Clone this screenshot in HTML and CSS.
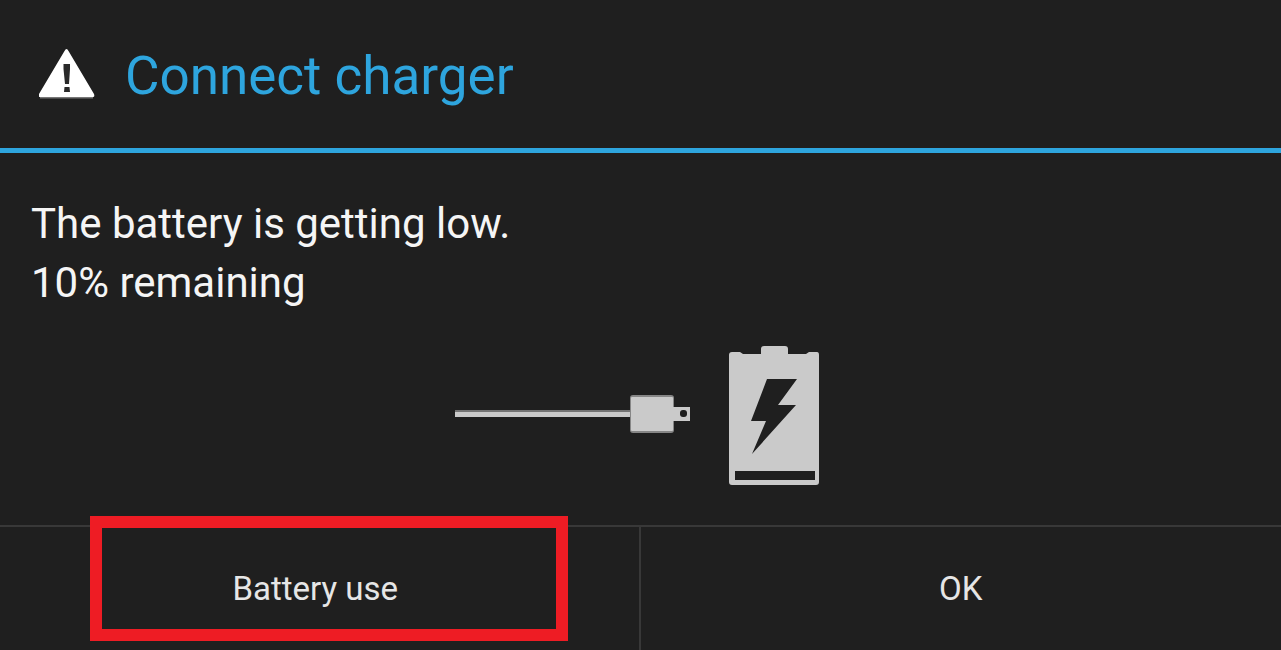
FILE: index.html
```html
<!DOCTYPE html>
<html lang="en">
<head>
    <meta charset="UTF-8">
    <meta name="viewport" content="width=device-width, initial-scale=1.0">
    <title>Connect charger</title>
    <link rel="stylesheet" href="styles.css">
</head>
<body>
    <main class="dialog">
        <header class="dialog-header">
            <svg class="warning-icon" width="56" height="52" viewBox="0 0 56 52" aria-hidden="true">
                <path d="M27.500 1Q28.500 1 29.500 3L55 46Q56 49 54 49H1Q-1 49 0 46L25.500 3Q26.500 1 27.500 1Z" fill="#fff"/>
                <path d="M1 49H54V50.500H1Z" fill="#777"/>
                <path d="M24.500 16H31V21L30 36H26L24.500 21ZM25.500 39H30.500L31 44H25Z" fill="#2a2a2a"/>
            </svg>
            <h1 class="dialog-title">Connect charger</h1>
        </header>

        <section class="dialog-body">
            <p class="message">The battery is getting low.<br>10% remaining</p>

            <svg class="charger" width="374" height="140" viewBox="0 0 374 140" aria-hidden="true">
                <!-- cable and plug -->
                <path d="M1 64H178V71H1Z" fill="#cacaca"/>
                <path d="M1 64H178V66H1Z" fill="#747474"/>
                <rect x="176" y="49" width="44" height="38" rx="3" fill="#868686"/>
                <rect x="177" y="51" width="42" height="34" rx="1" fill="#cacaca"/>
                <path d="M219 61H236V75H219Z" fill="#cacaca"/>
                <rect x="226" y="64" width="7" height="7" rx="3" fill="#1f1f1f"/>
                <!-- battery -->
                <path d="M278 6H286L289 8H307V3Q307 0 310 0H331Q334 0 334 3V8H352L355 6H363Q365 6 365 9V136Q365 139 362 139H278Q275 139 275 136V9Q275 6 278 6Z" fill="#cacaca"/>
                <path d="M313 33H343L324 59H342L298 108L312 75H297Z" fill="#1f1f1f"/>
                <path d="M281 125H361V134H281Z" fill="#1f1f1f"/>
            </svg>
        </section>

        <footer class="dialog-actions">
            <button type="button" class="action action-usage">Battery use<span class="highlight"></span></button>
            <button type="button" class="action">OK</button>
        </footer>
    </main>
</body>
</html>
```

FILE: styles.css
```css
* {
    box-sizing: border-box;
}

body {
    margin: 0;
    background: #1f1f1f;
    color: #f5f5f5;
    font-family: Roboto, sans-serif;
}

.dialog {
    display: flex;
    flex-direction: column;
    min-height: 100vh;
}

.dialog-header {
    display: flex;
    align-items: flex-start;
    gap: 30px;
    padding: 42px 39px 38px;
    border-bottom: 5px solid #2ea5de;
}

.warning-icon {
    flex: none;
    margin-top: 6px;
}

.dialog-title {
    margin: 0;
    font-size: 53px;
    line-height: 68px;
    font-weight: 400;
    color: #2ea5de;
}

.dialog-body {
    padding: 41px 31px 39px;
}

.message {
    margin: 0 0 34px;
    font-size: 42px;
    line-height: 59px;
}

.charger {
    display: block;
    margin: 0 auto;
}

.dialog-actions {
    display: grid;
    grid-template-columns: 1fr 1fr;
    flex: 1;
    border-top: 2px solid #383838;
}

.action {
    position: relative;
    padding: 40px 16px;
    border: 0;
    background: none;
    color: #e6e6e6;
    font-family: inherit;
    font-size: 33px;
    line-height: 44px;
}

.action-usage {
    padding-right: 24px;
    border-right: 2px solid #383838;
}

/* red frame over the first button */
.highlight {
    position: absolute;
    top: -11px;
    left: 90px;
    right: 71px;
    bottom: 10px;
    border: 12px solid #ee1c24;
    pointer-events: none;
}
```
